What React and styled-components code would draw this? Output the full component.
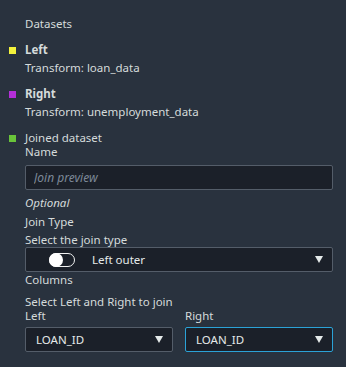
import React from "react";
import styled, { createGlobalStyle } from "styled-components";

const Global = createGlobalStyle`
  html, body {
    margin: 0;
    padding: 0;
    background: #29323e;
  }
  body {
    font-family: "Noto Sans", "Open Sans", sans-serif;
    font-size: 11.5px;
    color: #d5dbdb;
  }
`;

const Panel = styled.div`
  width: 346px;
  height: 367px;
  box-sizing: border-box;
  padding: 17px 13px 0 25px;
  background: #29323e;
  display: flex;
  flex-direction: column;
`;

const Label = styled.div`
  line-height: 14px;
  font-size: 11.5px;
  margin-top: ${(p) => p.mt || 0}px;
  font-weight: ${(p) => (p.bold ? 700 : 400)};
  font-style: ${(p) => (p.italic ? "italic" : "normal")};
  white-space: nowrap;
`;

const LegendRow = styled.div`
  display: flex;
  align-items: center;
  margin-left: -16px;
  margin-top: ${(p) => p.mt || 0}px;
`;

const Swatch = styled.span`
  width: 7px;
  height: 7px;
  background: ${(p) => p.color};
  margin-right: 9px;
  flex: none;
`;

const Input = styled.input`
  box-sizing: border-box;
  width: 308px;
  height: 25px;
  margin-top: ${(p) => p.mt || 0}px;
  background: #1b2029;
  border: 1px solid #545d69;
  border-radius: 2px;
  color: #d5dbdb;
  font-family: inherit;
  font-size: 12px;
  padding: 0 8px;
  outline: none;
  &::placeholder {
    color: #7d8998;
    font-style: italic;
  }
`;

const SelectBox = styled.div`
  box-sizing: border-box;
  height: 25px;
  margin-top: ${(p) => p.mt || 0}px;
  width: ${(p) => p.w || "100%"};
  background: #1b2029;
  border: 1px solid ${(p) => (p.focused ? "#2ba2d6" : "#545d69")};
  border-radius: 2px;
  display: flex;
  align-items: center;
  padding: 0 9px 0 10px;
  color: #e5eaea;
  font-size: 11.5px;
`;

const SelectText = styled.span`
  flex: 1;
  white-space: nowrap;
`;

const Caret = styled.span`
  width: 0;
  height: 0;
  border-left: 4.5px solid transparent;
  border-right: 4.5px solid transparent;
  border-top: 7px solid #e5eaea;
  flex: none;
`;

const Toggle = styled.span`
  box-sizing: border-box;
  width: 26px;
  height: 14px;
  border: 1px solid #f2f3f3;
  border-radius: 7px;
  margin-left: 13px;
  margin-right: 17px;
  position: relative;
  flex: none;
  &::before {
    content: "";
    position: absolute;
    left: -1px;
    top: -1px;
    width: 14px;
    height: 14px;
    border-radius: 50%;
    background: #ffffff;
  }
`;

const Columns = styled.div`
  display: grid;
  grid-template-columns: 148px 148px;
  column-gap: 12px;
`;

const Col = styled.div`
  display: flex;
  flex-direction: column;
`;

export default function App() {
  return (
    <>
      <Global />
      <Panel>
        <Label>Datasets</Label>
        <LegendRow mt={12}>
          <Swatch color="#f3f23c" />
          <Label bold>Left</Label>
        </LegendRow>
        <Label mt={4}>Transform: loan_data</Label>
        <LegendRow mt={12}>
          <Swatch color="#b42fd9" />
          <Label bold>Right</Label>
        </LegendRow>
        <Label mt={4}>Transform: unemployment_data</Label>
        <LegendRow mt={12}>
          <Swatch color="#69c43a" />
          <Label>Joined dataset</Label>
        </LegendRow>
        <Label>Name</Label>
        <Input mt={6} placeholder="Join preview" />
        <Label italic mt={6}>Optional</Label>
        <Label mt={5}>Join Type</Label>
        <Label mt={4}>Select the join type</Label>
        <SelectBox w="308px">
          <Toggle />
          <SelectText>Left outer</SelectText>
          <Caret />
        </SelectBox>
        <Label mt={1}>Columns</Label>
        <Label mt={8}>Select Left and Right to join</Label>
        <Columns>
          <Col>
            <Label>Left</Label>
            <SelectBox mt={4}>
              <SelectText>LOAN_ID</SelectText>
              <Caret />
            </SelectBox>
          </Col>
          <Col>
            <Label>Right</Label>
            <SelectBox mt={4} focused>
              <SelectText>LOAN_ID</SelectText>
              <Caret />
            </SelectBox>
          </Col>
        </Columns>
      </Panel>
    </>
  );
}
